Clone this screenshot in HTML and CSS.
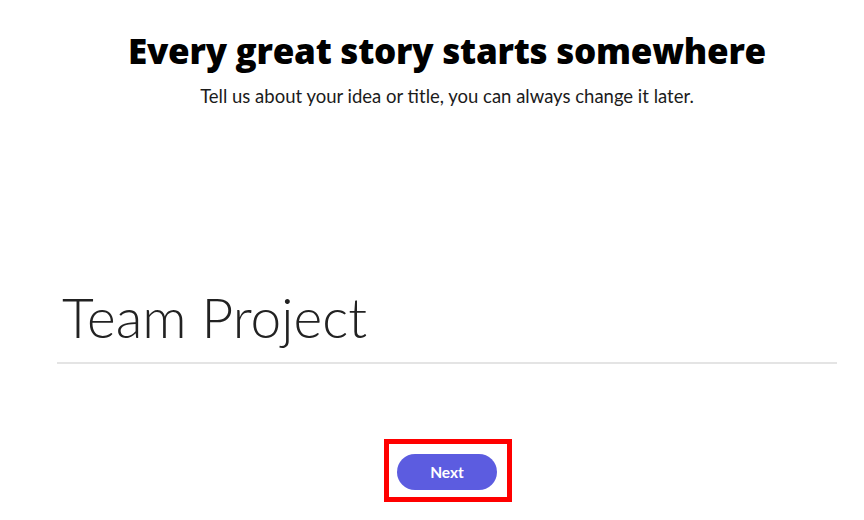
FILE: index.html
```html
<!DOCTYPE html>
<html>
<head>
<meta charset="utf-8">
<link rel="stylesheet" href="styles.css">
</head>
<body>
<main class="page">
  <header class="intro">
    <h1 class="title">Every great story starts somewhere</h1>
    <p class="subtitle">Tell us about your idea or title, you can always change it later.</p>
  </header>
  <div class="field">
    <div class="field-value">Team Project</div>
  </div>
  <div class="actions">
    <div class="highlight">
      <button class="btn-next" type="button">Next</button>
    </div>
  </div>
</main>
</body>
</html>
```
FILE: styles.css
```css
html, body {
  margin: 0;
  padding: 0;
  background: #ffffff;
}
body {
  font-family: "Lato", "Liberation Sans", sans-serif;
  color: #000;
  width: 864px;
  height: 520px;
  overflow: hidden;
}
.page {
  display: flex;
  flex-direction: column;
  padding: 0 27px 0 57px;
}
.intro {
  display: flex;
  flex-direction: column;
  align-items: center;
  padding-top: 29px;
}
.title {
  margin: 0;
  font-family: "Open Sans", sans-serif;
  font-weight: 800;
  font-size: 35px;
  line-height: 44px;
  color: #000;
  letter-spacing: -0.25px;
}
.subtitle {
  margin: 12px 0 0 0;
  font-family: "Lato", sans-serif;
  font-size: 18.5px;
  line-height: 22px;
  color: #1b1b1b;
}
.field {
  margin-top: 178px;
  border-bottom: 2px solid #e4e4e4;
  padding: 0 0 13px 5px;
}
.field-value {
  font-family: "Lato", sans-serif;
  font-weight: 300;
  font-size: 55px;
  line-height: 64px;
  color: #222;
}
.actions {
  display: flex;
  justify-content: center;
  margin-top: 75px;
  margin-left: 2px;
}
.highlight {
  border: 5px solid #ff0000;
  padding: 10px 10px 7px 8px;
}
.btn-next {
  display: block;
  width: 100px;
  height: 36px;
  border: none;
  border-radius: 18px;
  background: #5c5ce0;
  color: #fff;
  font-family: "Lato", sans-serif;
  font-weight: 700;
  font-size: 15.5px;
  padding: 0;
}
```
